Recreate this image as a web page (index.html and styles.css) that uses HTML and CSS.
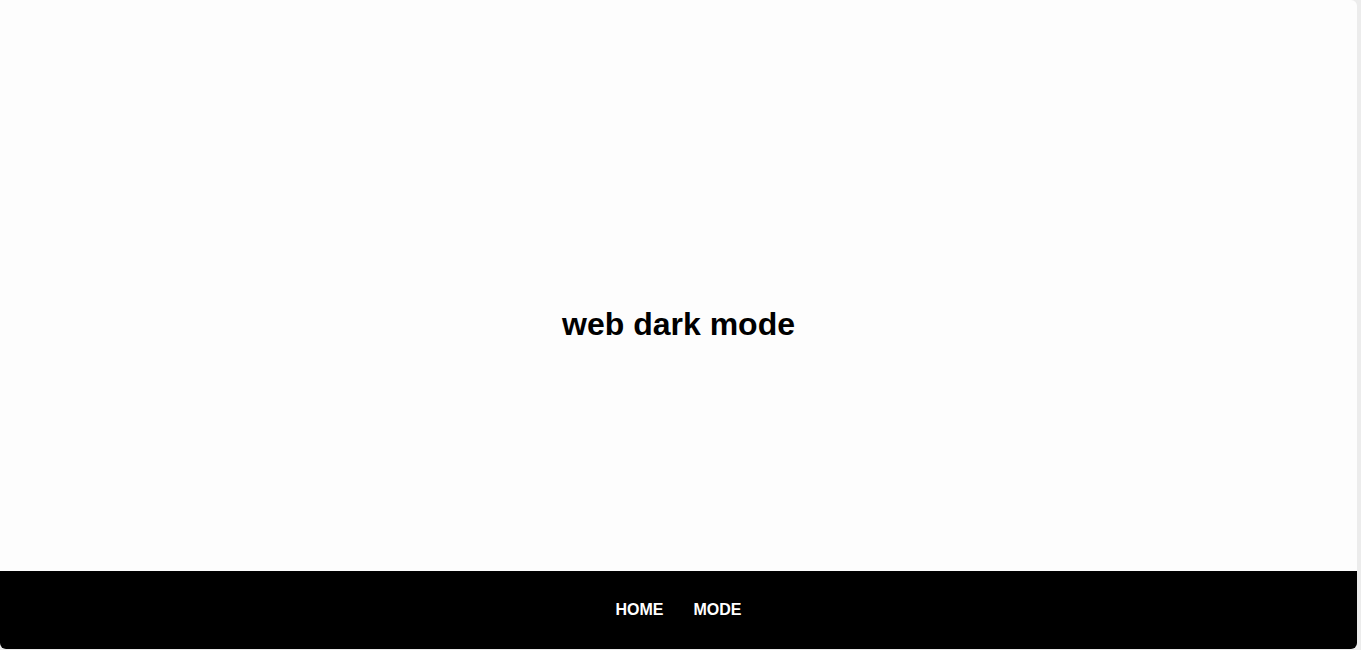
FILE: index.html
```html
<!DOCTYPE html>
<html lang="en">
<head>
<meta charset="utf-8">
<title>web dark mode</title>
<link rel="stylesheet" href="styles.css">
</head>
<body>
<div class="window">
  <main class="content">
    <h1 class="title">web dark mode</h1>
  </main>
  <footer class="footer">
    <nav class="nav">
      <a class="nav-link" href="#">HOME</a>
      <a class="nav-link" href="#">MODE</a>
    </nav>
  </footer>
</div>
</body>
</html>
```
FILE: styles.css
```css
html, body {
  margin: 0;
  padding: 0;
  height: 100%;
}
body {
  background: #ececec;
  font-family: "Liberation Sans", Arial, sans-serif;
}
.window {
  width: 1357px;
  height: 649px;
  display: flex;
  flex-direction: column;
  background: #fdfdfd;
  border-radius: 0 6px 6px 6px;
  overflow: hidden;
}
.content {
  flex: 1;
  display: flex;
  align-items: center;
  justify-content: center;
  padding-top: 78px;
}
.title {
  margin: 0;
  font-size: 32px;
  font-weight: bold;
  color: #000;
}
.footer {
  height: 78px;
  background: #000;
  display: flex;
  align-items: center;
  justify-content: center;
}
.nav {
  display: flex;
  gap: 30px;
  padding-bottom: 1px;
}
.nav-link {
  color: #fff;
  font-weight: bold;
  font-size: 16px;
  text-decoration: none;
}
```
